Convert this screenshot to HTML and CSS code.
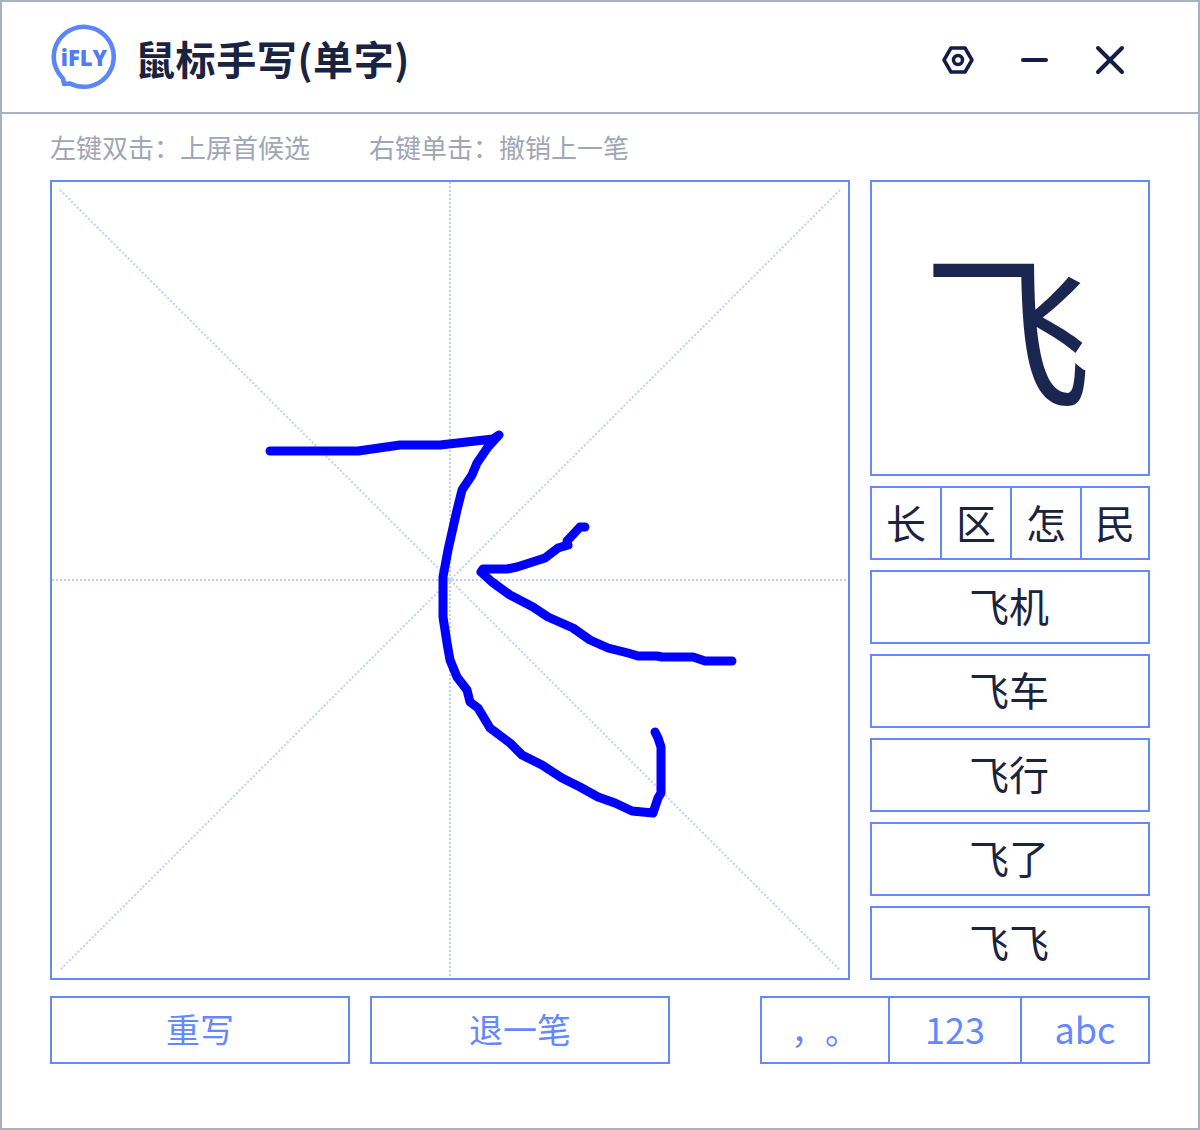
FILE: index.html
```html
<!DOCTYPE html>
<html lang="zh-CN">
<head>
  <meta charset="UTF-8">
  <meta name="viewport" content="width=device-width, initial-scale=1.0">
  <title>鼠标手写(单字)</title>
  <link rel="stylesheet" href="styles.css">
</head>
<body>
  <div class="window">
    <!-- Title bar -->
    <div class="header">
      <svg class="logo" viewBox="0 0 70 70">
        <path d="M13 54.5 A30 30 0 1 1 20 59.5 L14 60 Z" fill="none" stroke="#5b85f8" stroke-width="4.5" stroke-linejoin="round"/>
        <text x="34" y="42" text-anchor="middle" class="logo-text">iFLY</text>
      </svg>
      <div class="title">鼠标手写(单字)</div>
      <div class="controls">
        <div class="control">
          <svg width="36" height="32" viewBox="0 0 36 32">
            <path d="M4 16 L11 4 H25 L32 16 L25 28 H11 Z" class="icon-line"/>
            <circle cx="18" cy="16" r="4.5" class="icon-line"/>
          </svg>
        </div>
        <div class="control">
          <svg width="36" height="32" viewBox="0 0 36 32">
            <path d="M7 16 H30" class="icon-line icon-thick"/>
          </svg>
        </div>
        <div class="control">
          <svg width="36" height="32" viewBox="0 0 36 32">
            <path d="M6 4 L30 28 M30 4 L6 28" class="icon-line icon-thick"/>
          </svg>
        </div>
      </div>
    </div>

    <div class="content">
      <div class="hints">
        <span>左键双击：上屏首候选</span>
        <span>右键单击：撤销上一笔</span>
      </div>

      <div class="main">
        <!-- Writing pad -->
        <div class="pad">
          <svg class="pad-svg" viewBox="52 182 796 796">
            <path d="M60 190 L840 970 M840 190 L60 970" class="guide"/>
            <path d="M450 182 V978 M52 580 H848" class="guide"/>
            <polyline class="ink" points="270,451 358,451 400,445 440,445 493,439 499,435 488,447 477,463 472,475 462,490 457,510 448,550 443,577 443,617 447,643 450,660 457,677 467,690 470,702 478,708 490,728 510,743 522,755 542,765 562,778 580,787 598,797 615,803 632,811 653,813 658,798 661,793 661,747 658,738 655,732"/>
            <polyline class="ink" points="585,527 580,527 567,541 568,545 558,548 545,558 517,567 507,569 483,569 481,572 492,582 510,595 533,607 548,617 573,628 590,640 608,648 628,653 638,656 657,656 662,657 693,657 705,661 732,661"/>
          </svg>
        </div>

        <!-- Candidates -->
        <div class="side">
          <div class="preview">飞</div>
          <div class="chars">
            <div class="char">长</div>
            <div class="char">区</div>
            <div class="char">怎</div>
            <div class="char">民</div>
          </div>
          <div class="word">飞机</div>
          <div class="word">飞车</div>
          <div class="word">飞行</div>
          <div class="word">飞了</div>
          <div class="word">飞飞</div>
        </div>
      </div>

      <div class="footer">
        <button class="btn">重写</button>
        <button class="btn">退一笔</button>
        <div class="modes">
          <div class="mode mode-punct">，。</div>
          <div class="mode">123</div>
          <div class="mode">abc</div>
        </div>
      </div>
    </div>
  </div>
</body>
</html>
```

FILE: styles.css
```css
body {
  margin: 0;
  background: #fff;
  font-family: "Noto Sans CJK SC", "Noto Sans", sans-serif;
}
.window {
  box-sizing: border-box;
  width: 1200px;
  height: 1130px;
  border: 2px solid #a9b0c0;
  background: #fff;
}
.header {
  display: flex;
  align-items: center;
  height: 104px;
  padding: 6px 50px 0 48px;
  border-bottom: 2px solid #a9b0c0;
}
.logo {
  width: 70px;
  height: 70px;
  margin-bottom: 2px;
}
.logo-text {
  font-family: "Open Sans", sans-serif;
  font-size: 22px;
  font-weight: 800;
  fill: #4f7cf0;
}
.title {
  margin-left: 15px;
  margin-bottom: 5px;
  font-size: 40px;
  font-weight: 700;
  line-height: 1;
  letter-spacing: 0.6px;
  color: #1a2340;
}
.controls {
  display: flex;
  margin-left: auto;
}
.control {
  display: flex;
  justify-content: center;
  align-items: center;
  width: 76px;
  height: 40px;
}
.icon-line {
  fill: none;
  stroke: #141c48;
  stroke-width: 3.5;
  stroke-linejoin: round;
}
.icon-thick {
  stroke-width: 4;
  stroke-linecap: round;
}
.content {
  padding: 0 48px;
}
.hints {
  display: flex;
  gap: 59px;
  align-items: center;
  height: 66px;
  font-size: 26px;
  line-height: 1;
  color: #a0a6b6;
}
.main {
  display: flex;
  gap: 20px;
  height: 800px;
}
.pad {
  box-sizing: border-box;
  width: 800px;
  height: 800px;
  border: 2px solid #6488ff;
}
.pad-svg {
  display: block;
  width: 796px;
  height: 796px;
}
.guide {
  fill: none;
  stroke: #bcd0ff;
  stroke-width: 2;
  stroke-dasharray: 2 2;
}
.ink {
  fill: none;
  stroke: #0000ff;
  stroke-width: 9;
  stroke-linecap: round;
  stroke-linejoin: round;
}
.side {
  display: flex;
  flex-direction: column;
  gap: 10px;
  width: 280px;
}
.preview {
  box-sizing: border-box;
  display: flex;
  justify-content: center;
  align-items: center;
  height: 296px;
  padding: 0 6px 10px 0;
  border: 2px solid #6488ff;
  font-size: 170px;
  line-height: 1;
  color: #1a2550;
}
.chars {
  box-sizing: border-box;
  display: grid;
  grid-template-columns: repeat(3, 70px) 1fr;
  height: 74px;
  border: 2px solid #6488ff;
}
.char {
  display: flex;
  justify-content: center;
  align-items: center;
  padding-bottom: 2px;
  border-right: 2px solid #6488ff;
  font-size: 40px;
  line-height: 1;
  color: #1a2340;
}
.char:last-child {
  border-right: none;
}
.word {
  box-sizing: border-box;
  display: flex;
  justify-content: center;
  align-items: center;
  height: 74px;
  padding: 0 2px 4px 0;
  border: 2px solid #6488ff;
  font-size: 40px;
  line-height: 1;
  color: #1a2340;
}
.footer {
  display: flex;
  gap: 20px;
  margin-top: 16px;
}
.btn {
  box-sizing: border-box;
  width: 300px;
  height: 68px;
  padding: 0 0 3px;
  border: 2px solid #6488ff;
  background: #fff;
  font-family: inherit;
  font-size: 34px;
  line-height: 1;
  color: #6488ff;
}
.modes {
  box-sizing: border-box;
  display: grid;
  grid-template-columns: 128px 132px 1fr;
  width: 390px;
  height: 68px;
  margin-left: auto;
  border: 2px solid #6488ff;
}
.mode {
  display: flex;
  justify-content: center;
  align-items: center;
  padding-bottom: 4px;
  border-right: 2px solid #6488ff;
  font-size: 36px;
  line-height: 1;
  color: #6488ff;
}
.mode:last-child {
  border-right: none;
}
.mode-punct {
  padding-bottom: 0;
  font-size: 34px;
  text-spacing-trim: space-all;
}
```
